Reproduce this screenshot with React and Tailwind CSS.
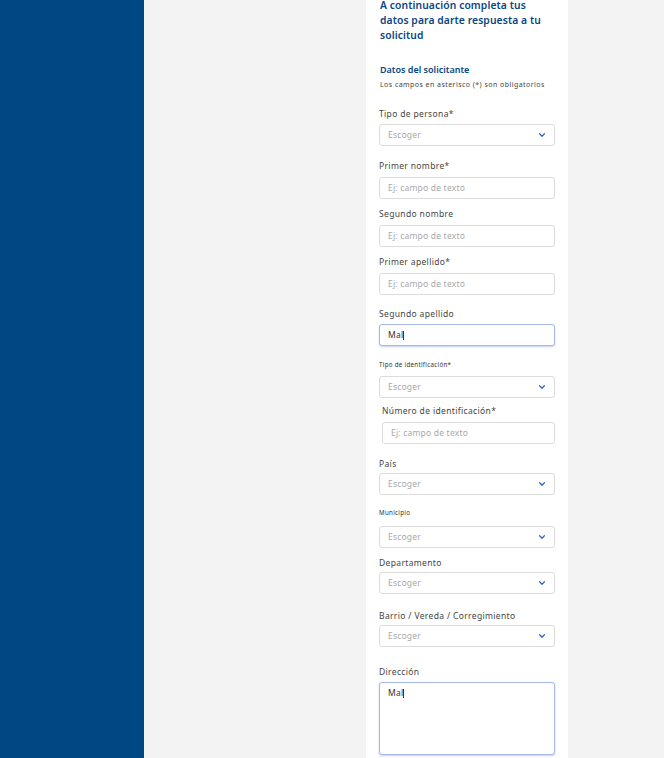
import React from 'react'

const FONT = { fontFamily: '"Noto Sans", "Open Sans", Arial, sans-serif' }

function Chevron() {
  return (
    <svg className="h-[8px] w-[8px] text-[#3366cc]" viewBox="0 0 10 10" fill="none" stroke="currentColor">
      <path d="M2 3.5 L5 6.5 L8 3.5" strokeWidth={1.6} strokeLinecap="round" strokeLinejoin="round" />
    </svg>
  )
}

function Label({ children, tiny, className = '' }) {
  if (tiny) {
    return <div className={`text-[6.2px] leading-[8px] tracking-[0.3px] text-[#333] ${className}`}>{children}</div>
  }
  return <div className={`text-[8.5px] leading-[12px] tracking-[0.35px] text-[#444] ${className}`}>{children}</div>
}

function SelectBox({ className = '' }) {
  return (
    <div className={`h-[22px] flex items-center justify-between rounded-[3px] border border-[#dcdcdc] bg-white pl-[8px] pr-[8px] ${className}`}>
      <span className="text-[8.5px] tracking-[0.2px] text-[#a8a8a8]">Escoger</span>
      <Chevron />
    </div>
  )
}

function TextBox({ value, focused, className = '' }) {
  return (
    <div
      className={`h-[22px] flex items-center rounded-[3px] border bg-white px-[8px] text-[8.5px] tracking-[0.2px] ${
        focused ? 'border-[#a6b8ea] shadow-[0_1px_2px_rgba(90,120,220,0.35)] text-[#333]' : 'border-[#dcdcdc] text-[#a8a8a8]'
      } ${className}`}
    >
      {value ? (
        <span>
          {value}
          <span className="inline-block w-px h-[9px] bg-[#333] align-middle" />
        </span>
      ) : (
        'Ej: campo de texto'
      )}
    </div>
  )
}

export default function App() {
  return (
    <div className="flex h-[758px] w-[664px] overflow-hidden bg-[#f3f3f3]" style={FONT}>
      <aside className="w-[144px] shrink-0 bg-[#004884]" />

      <main className="flex-1 pl-[222px]">
        <div className="w-[202px] min-h-[800px] bg-white pl-[13px] pr-[13px]">
          {/* Heading */}
          <h1 className="-mt-[2px] pl-px text-[10.3px] font-semibold leading-[15px] tracking-[0.1px] text-[#0b457f]">
            A continuación completa tus datos para darte respuesta a tu solicitud
          </h1>

          <h2 className="mt-[21px] pl-px text-[9px] font-semibold leading-[12px] tracking-[0px] text-[#0b457f]">
            Datos del solicitante
          </h2>
          <p className="mt-[4px] pl-px text-[7px] leading-[10px] tracking-[0.45px] text-[#444]">
            Los campos en asterisco (*) son obligatorios
          </p>

          <Label className="mt-[18px]">Tipo de persona*</Label>
          <SelectBox className="mt-[4px]" />

          <Label className="mt-[14px]">Primer nombre*</Label>
          <TextBox className="mt-[5px]" />

          <Label className="mt-[9px]">Segundo nombre</Label>
          <TextBox className="mt-[5px]" />

          <Label className="mt-[9px]">Primer apellido*</Label>
          <TextBox className="mt-[5px]" />

          <Label className="mt-[13px]">Segundo apellido</Label>
          <TextBox className="mt-[4px]" value="Mal" focused />

          <Label tiny className="mt-[15px]">Tipo de identificación*</Label>
          <SelectBox className="mt-[7px]" />

          <div className="pl-[3px]">
            <Label className="mt-[7px]">Número de identificación*</Label>
            <TextBox className="mt-[5px]" />
          </div>

          <Label className="mt-[14px]">País</Label>
          <SelectBox className="mt-[3px]" />

          <Label tiny className="mt-[14px]">Municipio</Label>
          <SelectBox className="mt-[9px]" />

          <Label className="mt-[9px]">Departamento</Label>
          <SelectBox className="mt-[3px]" />

          <Label className="mt-[16px]">Barrio / Vereda / Corregimiento</Label>
          <SelectBox className="mt-[3px]" />

          <Label className="mt-[19px]">Dirección</Label>
          <div className="mt-[4px] h-[73px] rounded-[3px] border border-[#a6b8ea] bg-white px-[8px] pt-[4px] text-[8.5px] tracking-[0.2px] text-[#333] shadow-[0_1px_2px_rgba(90,120,220,0.35)]">
            Mal<span className="inline-block w-px h-[9px] bg-[#333] align-middle" />
          </div>
        </div>
      </main>
    </div>
  )
}
